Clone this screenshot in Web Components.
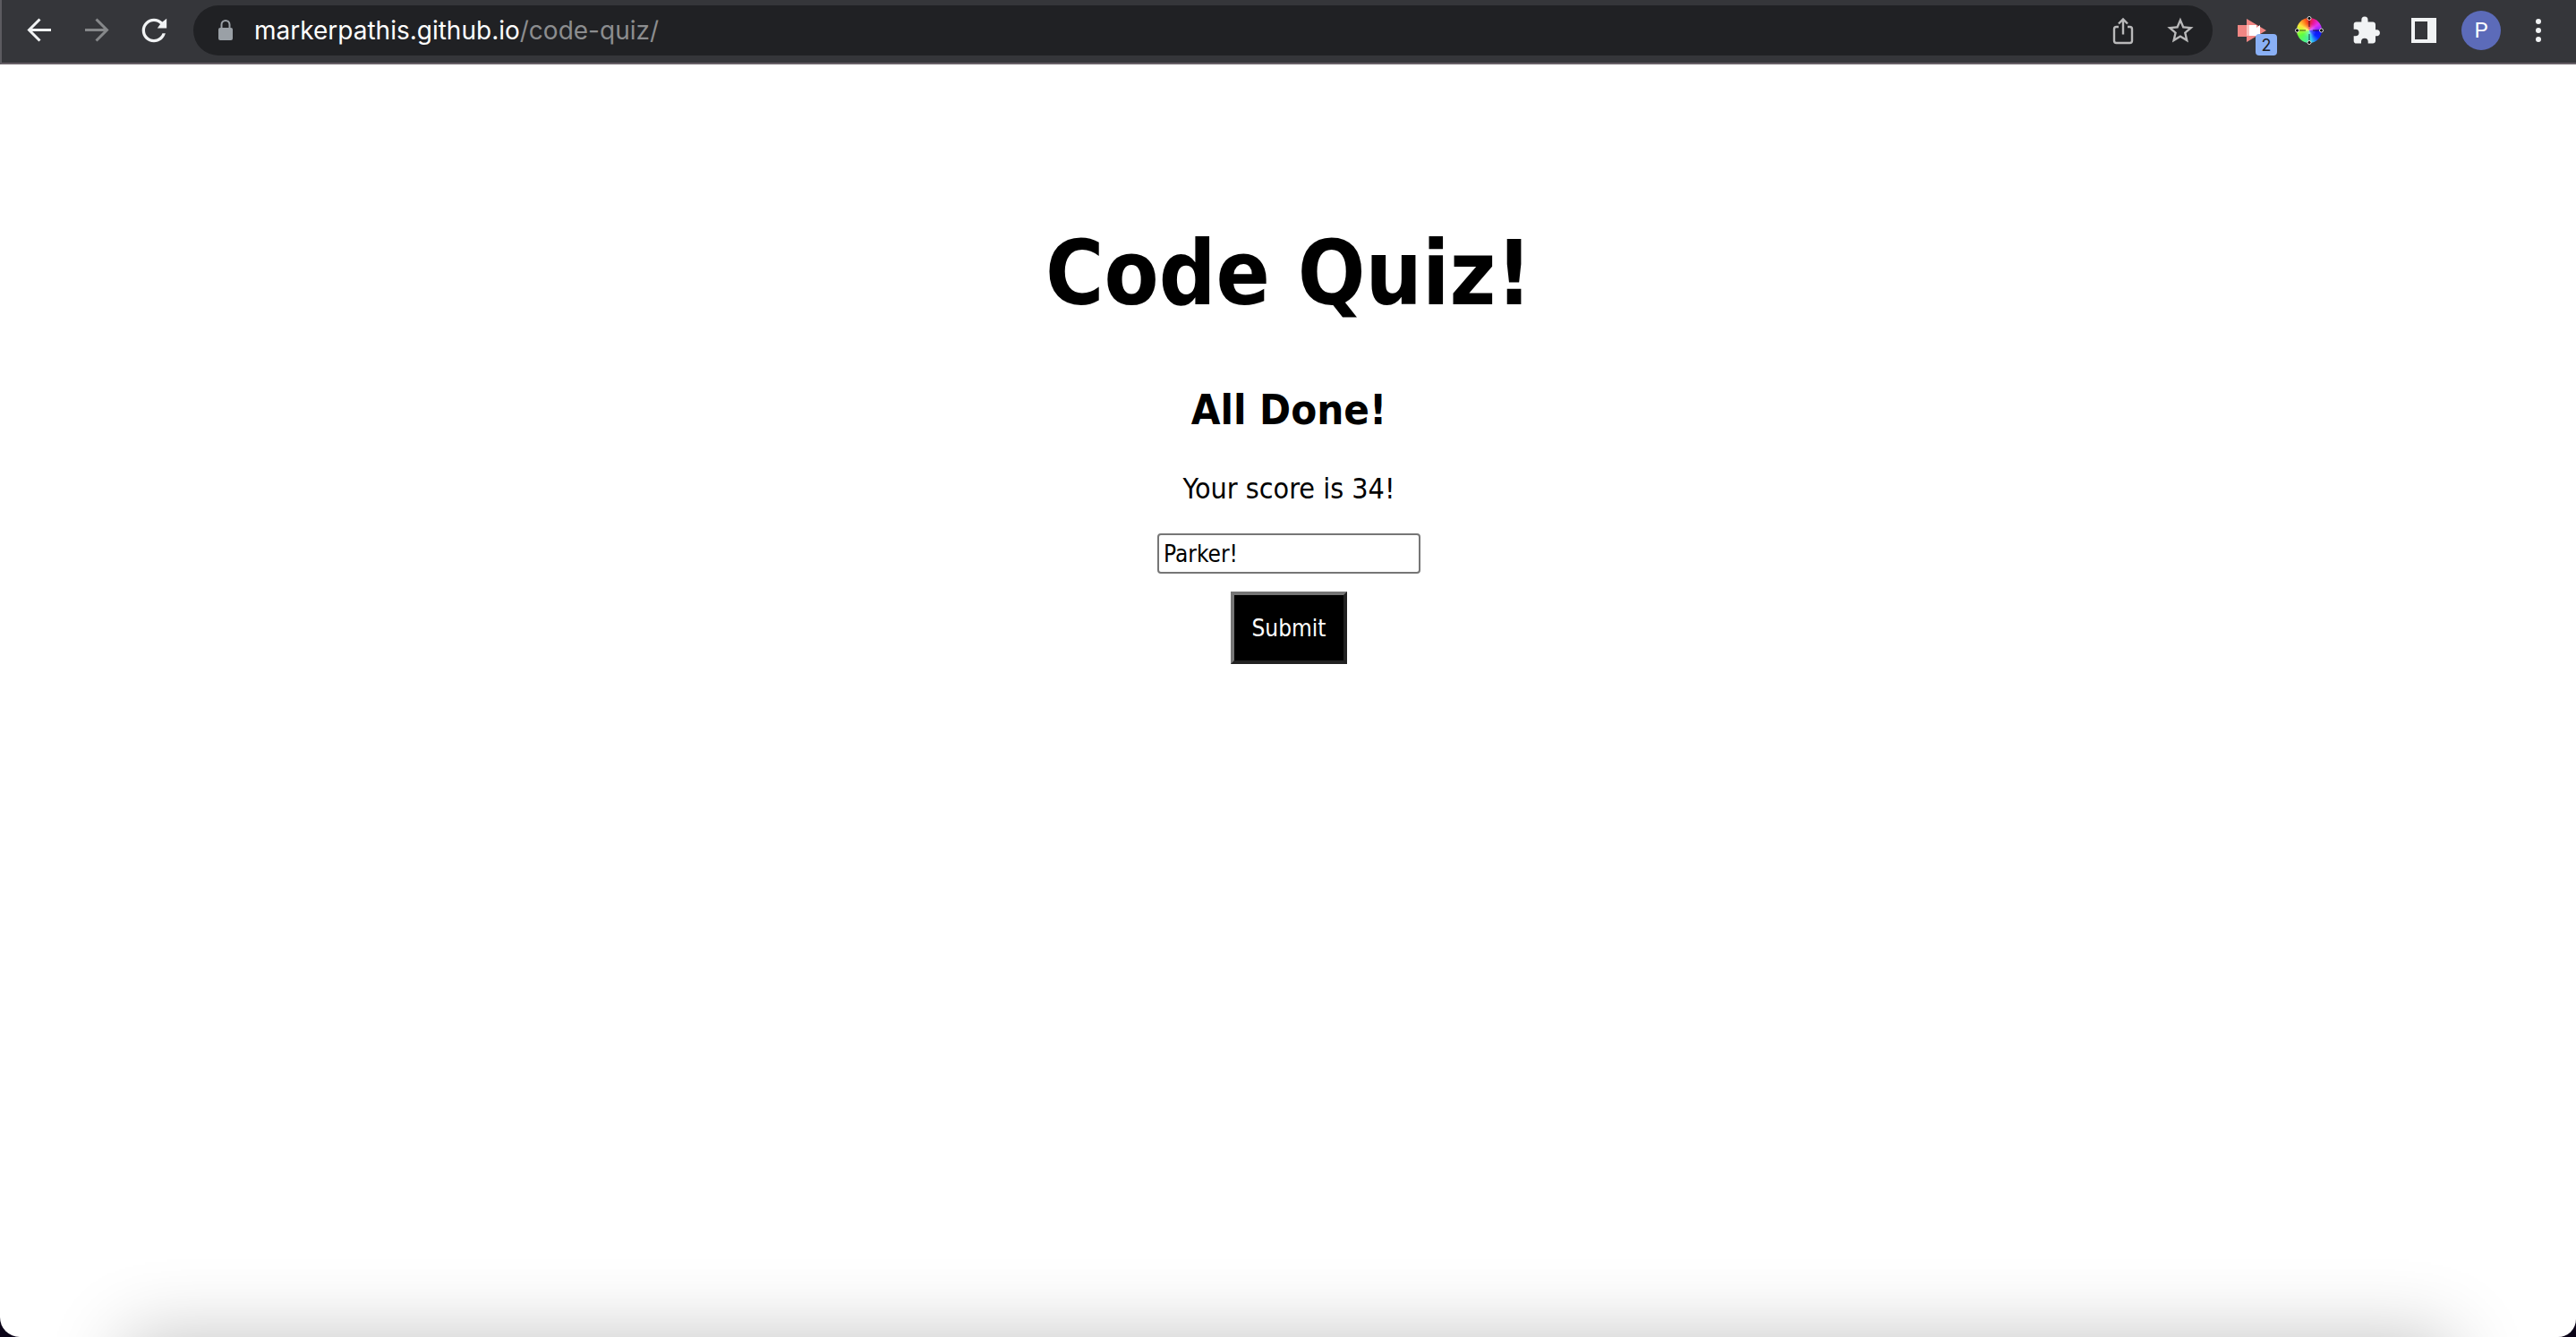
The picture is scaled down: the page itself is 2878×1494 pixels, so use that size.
<!DOCTYPE html>
<html lang="en">
<head>
<meta charset="utf-8">
<title>Code Quiz</title>
<style>
  html, body { margin: 0; height: 100%; }
  body { background: #0b0418; font-family: "DejaVu Sans Condensed", "DejaVu Sans", sans-serif; }
</style>
</head>
<body>
<browser-window>
  <browser-toolbar slot="toolbar">
    <tool-button slot="nav" label="Back">
      <svg viewBox="0 0 40 40" fill="none" stroke="#f1f3f4" stroke-width="3"><path d="M33 19.500H8.500M20.500 7.500 8.500 19.500l12 12"/></svg>
    </tool-button>
    <tool-button slot="nav" label="Forward">
      <svg viewBox="0 0 40 40" fill="none" stroke="#86888a" stroke-width="3"><path d="M7 19.500h24.500M19.500 7.500l12 12-12 12"/></svg>
    </tool-button>
    <tool-button slot="nav" label="Reload">
      <svg viewBox="0 0 24 24" fill="#f1f3f4"><path d="M17.650 6.350C16.200 4.900 14.210 4 12 4c-4.420 0-7.990 3.580-7.990 8s3.570 8 7.990 8c3.730 0 6.840-2.550 7.730-6h-2.080c-.820 2.330-3.040 4-5.650 4-3.310 0-6-2.690-6-6s2.690-6 6-6c1.660 0 3.140.690 4.220 1.780L14.300 10.500H20.500V4z"/></svg>
    </tool-button>

    <address-bar slot="address" host="markerpathis.github.io" path="/code-quiz/"></address-bar>

    <tool-button slot="actions" label="Recorder extension, 2 notifications" badge="2">
      <svg viewBox="0 0 40 40"><path fill="#f08683" d="M4 14h10V7l22 13-22 13v-6H4z"/><path fill="#fff" d="M14 14h11v3l4-3v12H14z"/><path fill="#f8c4c1" d="M14 14h3v12h-3z"/></svg>
    </tool-button>
    <tool-button slot="actions" label="Color picker">
      <color-wheel></color-wheel>
    </tool-button>
    <tool-button slot="actions" label="Extensions">
      <svg viewBox="0.600 -0.600 24 24" fill="#f1f3f4"><path d="M19.900 11h-1.300V7.500c0-1-.800-1.800-1.800-1.800H13.500V4.300a2.150 2.150 0 0 0-4.300 0v1.400H5.700c-1 0-1.700.800-1.700 1.700v3.200h1.200a2.300 2.300 0 0 1 0 4.600H4v3.200c0 1 .800 1.700 1.700 1.700H9v-1.200a2.300 2.300 0 0 1 4.600 0v1.200h3.200c1 0 1.800-.800 1.800-1.700v-3.300h1.300a2.100 2.100 0 0 0 0-4.100z"/></svg>
    </tool-button>
    <tool-button slot="actions" label="Side panel">
      <svg viewBox="0 0 40 40"><path fill="#f1f3f4" fill-rule="evenodd" d="M6 6h28v28H6zM10 10v20h14V10z"/></svg>
    </tool-button>
    <tool-button slot="actions" label="Profile"><profile-badge>P</profile-badge></tool-button>
    <tool-button slot="actions" label="Menu">
      <svg viewBox="0 0 40 40" fill="#f1f3f4"><circle cx="20" cy="10" r="3"/><circle cx="20" cy="20" r="3"/><circle cx="20" cy="30" r="3"/></svg>
    </tool-button>
  </browser-toolbar>

  <quiz-page heading="Code Quiz!">
    <score-form heading="All Done!" initials="Parker!">Your score is 34!</score-form>
  </quiz-page>
</browser-window>

<script>
  class BaseElement extends HTMLElement {
    connectedCallback() {
      if (this.shadowRoot) return;
      this.attachShadow({ mode: 'open' }).innerHTML = this.render();
    }
    attr(name) { return this.getAttribute(name) || ''; }
  }

  customElements.define('browser-window', class extends BaseElement {
    render() {
      return `
        <style>
          :host { display: flex; flex-direction: column; position: relative; min-height: 100vh; background: #fff;
                  border-radius: 0 0 20px 22px; overflow: hidden; box-sizing: border-box; }
          .dock { position: absolute; inset: auto 0 0; height: 120px; overflow: hidden; pointer-events: none; }
          .dock::after { content: ""; position: absolute; left: 140px; right: 140px; top: 100%; height: 300px;
                         box-shadow: 0 0 80px rgba(0, 0, 0, .24); }
        </style>
        <slot name="toolbar"></slot>
        <slot></slot>
        <div class="dock"></div>`;
    }
  });

  customElements.define('browser-toolbar', class extends BaseElement {
    render() {
      return `
        <style>
          :host { display: flex; align-items: center; gap: 12px; padding: 6px 10px 8px; background: #35363a;
                  border-bottom: 2px solid #675f66; border-left: 2px solid #5c5b60; }
          nav, .actions { display: flex; }
          .address { flex: 1; min-width: 0; }
        </style>
        <nav><slot name="nav"></slot></nav>
        <div class="address"><slot name="address"></slot></div>
        <div class="actions"><slot name="actions"></slot></div>`;
    }
  });

  customElements.define('tool-button', class extends BaseElement {
    render() {
      const badge = this.attr('badge');
      return `
        <style>
          :host { display: block; width: 64px; }
          button { display: flex; align-items: center; justify-content: center; position: relative;
                   width: 100%; height: 56px; margin: 0; padding: 0; border: 0; background: none; }
          ::slotted(svg) { width: 40px; height: 40px; }
          .badge { position: absolute; right: 4px; bottom: 0; width: 24px; height: 24px; border-radius: 4px;
                   background: #8ab0f5; color: #202124; font: 18px/26px Inter, sans-serif; text-align: center; }
        </style>
        <button type="button" aria-label="${this.attr('label')}"><slot></slot>${badge ? `<span class="badge">${badge}</span>` : ''}</button>`;
    }
  });

  customElements.define('address-bar', class extends BaseElement {
    render() {
      return `
        <style>
          :host { display: flex; align-items: center; height: 56px; padding: 0 4px; border-radius: 28px; background: #202124;
                  font: 28px/56px Inter, sans-serif; }
          .url { flex: 1; min-width: 0; color: #fff; white-space: nowrap; overflow: hidden; outline: 0; }
          .path { color: #8c8d8f; }
        </style>
        <tool-button label="Site information">
          <svg viewBox="0 0 40 40"><rect x="12" y="17" width="16" height="14" rx="2" fill="#9aa0a6"/><path d="M15.500 18v-4.500a4.500 4.500 0 0 1 9 0V18" fill="none" stroke="#9aa0a6" stroke-width="2"/></svg>
        </tool-button>
        <div class="url" role="textbox" aria-label="Address" tabindex="0"><span>${this.attr('host')}</span><span class="path">${this.attr('path')}</span></div>
        <tool-button label="Share">
          <svg viewBox="0 0 40 40" fill="none" stroke="#b9b9ba" stroke-width="2.400"><path d="M15 16h-2.500q-2.500 0-2.500 2.500v13q0 2.500 2.500 2.500h15q2.500 0 2.500-2.500v-13q0-2.500-2.500-2.500H25M20 24.500V8M15 12.500l5-5 5 5"/></svg>
        </tool-button>
        <tool-button label="Bookmark">
          <svg viewBox="-1.600 -1.800 27.300 27.300" fill="#b9b9ba"><path fill-rule="evenodd" d="M22 9.240l-7.190-.620L12 2 9.190 8.630 2 9.240l5.460 4.730L5.820 21 12 17.270 18.180 21l-1.630-7.030zM12 15.400l-3.760 2.270 1-4.280-3.320-2.880 4.380-.380L12 6.100l1.710 4.040 4.380.380-3.320 2.880 1 4.280z"/></svg>
        </tool-button>`;
    }
  });

  customElements.define('color-wheel', class extends BaseElement {
    render() {
      return `
        <style>
          :host { display: grid; width: 32px; height: 32px; }
          .disc, svg { grid-area: 1 / 1; }
          .disc { margin: 2px; border-radius: 50%;
                  background: radial-gradient(#fff6, #fff0 40%), conic-gradient(#e8202a, #e818a0 30deg, #e030f0 55deg, #a028ff 80deg, #1010f0 95deg, #0828ff 130deg, #38d8f0 170deg, #48f0a0 190deg, #60ff40 240deg, #c8ff30 275deg, #ffe040 300deg, #ff7018 335deg, #e8202a); }
        </style>
        <div class="disc"></div>
        <svg viewBox="0 0 32 32" fill="#000" stroke="#ddd" stroke-width="1">
          <path d="M16 4v8M16 20v8M4 16h8M20 16h8" stroke="#111" stroke-opacity=".500" stroke-width="1.600"/>
          <circle cx="16" cy="2.500" r="2"/><circle cx="16" cy="29.500" r="2"/><circle cx="2.500" cy="16" r="2"/><circle cx="29.500" cy="16" r="2"/>
        </svg>`;
    }
  });

  customElements.define('profile-badge', class extends BaseElement {
    render() {
      return `
        <style>
          :host { display: block; width: 44px; height: 44px; border-radius: 50%; background: #5c6bb9; color: #fff;
                  font: 24px/44px Roboto, sans-serif; text-align: center; }
        </style>
        <slot></slot>`;
    }
  });

  customElements.define('quiz-page', class extends BaseElement {
    render() {
      return `
        <style>
          :host { display: flex; flex-direction: column; align-items: center; flex: 1; padding: 174px 16px 0 18px; color: #000; }
          h1 { margin: 0 0 64px; font-size: 99px; line-height: 120px; text-align: center; }
        </style>
        <h1>${this.attr('heading')}</h1>
        <slot></slot>`;
    }
  });

  customElements.define('score-form', class extends BaseElement {
    render() {
      return `
        <style>
          :host { display: block; text-align: center; }
          form { display: flex; flex-direction: column; align-items: center; }
          h2 { margin: 0 0 40px; font-size: 47px; line-height: 56px; }
          p { margin: 0 0 30px; font-size: 32px; line-height: 40px; }
          input, button { font-family: inherit; font-size: 26px; line-height: 33px; box-sizing: border-box; }
          input { width: 294px; height: 45px; margin: 0 0 20px; padding: 4px 5px; border: 2px solid #767676; border-radius: 4px; background: #fff; color: #000; outline: 0; }
          button { min-width: 130px; margin: 0; padding: 21px 16px 19px; border: 4px solid; border-color: #767676 #212121 #212121 #767676;
                   border-radius: 0; background: #000; color: #fff; }
        </style>
        <form onsubmit="return false">
          <h2>${this.attr('heading')}</h2>
          <p><slot></slot></p>
          <input type="text" aria-label="Initials" value="${this.attr('initials')}">
          <button type="submit">Submit</button>
        </form>`;
    }
  });
</script>
</body>
</html>
